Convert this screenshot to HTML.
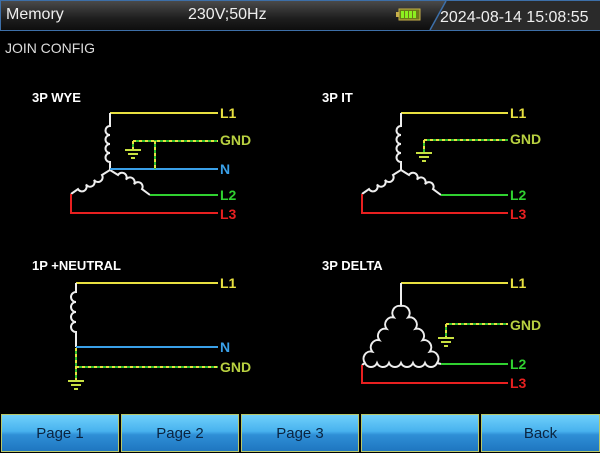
<!DOCTYPE html>
<html><head><meta charset="utf-8"><style>
html,body{margin:0;padding:0;background:#000;width:600px;height:450px;overflow:hidden;font-family:"Liberation Sans",sans-serif}
.hdr{position:absolute;left:0;top:0;width:598px;height:29px;border:1px solid #3d6fa8;background:linear-gradient(#4a4a4a,#1e1e1e 60%,#0e0e0e)}
.hdr span{position:absolute;top:5px;color:#eee;font-size:16px}
.btn{position:absolute;top:414px;height:36px;width:116px;border:1px solid #b8c86a;background:linear-gradient(#6fd0fb,#48b2ee 45%,#2f8fd6 55%,#1f76c0);color:#0b2440;font-size:15px;text-align:center;line-height:38px}
</style></head><body>
<div class="hdr">
<span style="left:5px">Memory</span>
<span style="left:187px">230V;50Hz</span>
</div>
<svg style="position:absolute;left:0;top:0" width="600" height="450">
<polygon points="430,30 446,1 600,1 600,30" fill="#2a2a2a"/>
<line x1="430" y1="30" x2="446" y2="1" stroke="#3d6fa8" stroke-width="1.5"/>
<rect x="399" y="9" width="21" height="11" fill="#6b7a18" stroke="#c8b04a" stroke-width="1"/>
<rect x="396" y="12" width="3" height="5" fill="#c8b04a"/>
<rect x="401" y="11" width="3" height="7" fill="#8cf020"/><rect x="405" y="11" width="3" height="7" fill="#8cf020"/><rect x="409" y="11" width="3" height="7" fill="#8cf020"/><rect x="413" y="11" width="3" height="7" fill="#8cf020"/>
<text x="440" y="22" fill="#eee" font-size="16" font-family="Liberation Sans">2024-08-14 15:08:55</text>
<text x="5" y="53" fill="#ddd" font-size="14" font-family="Liberation Sans" textLength="90">JOIN CONFIG</text>
<g font-family="Liberation Sans" font-weight="bold" font-size="13" fill="#fff">
<text x="32" y="102">3P WYE</text><text x="322" y="102">3P IT</text>
<text x="32" y="270">1P +NEUTRAL</text><text x="322" y="270">3P DELTA</text>
</g>
<g fill="none" stroke-width="2">
<!-- WYE -->
<path d="M110 113H218" stroke="#e8e040"/>
<path d="M110 113V126 a4 4 0 0 0 0 9 a4 4 0 0 0 0 9 a4 4 0 0 0 0 9 a4 4 0 0 0 0 9 V170 L102 175 a4.6 4.6 0 0 1 -8 4.7 a4.6 4.6 0 0 1 -8 4.7 a4.6 4.6 0 0 1 -8 4.7 L71 194 M110 170 L118 175 a4.6 4.6 0 0 1 8 4.7 a4.6 4.6 0 0 1 8 4.7 a4.6 4.6 0 0 1 8 4.7 L150 195" stroke="#eee"/>
<path d="M110 169H218" stroke="#3aa0e8"/>
<path d="M150 195H218" stroke="#30d030"/>
<path d="M71 194V213H218" stroke="#e82020"/>
<path d="M133 141H218 M155 141V169 M133 141V149" stroke="#30c030"/>
<path d="M133 141H218 M155 141V169 M133 141V149" stroke="#e8e040" stroke-dasharray="3 3"/>
<path d="M125 150H141 M128 154H138 M131 158H135" stroke="#c8e040"/>
<!-- IT -->
<path d="M401 113H508" stroke="#e8e040"/>
<path d="M401 113V126 a4 4 0 0 0 0 9 a4 4 0 0 0 0 9 a4 4 0 0 0 0 9 a4 4 0 0 0 0 9 V170 L393 175 a4.6 4.6 0 0 1 -8 4.7 a4.6 4.6 0 0 1 -8 4.7 a4.6 4.6 0 0 1 -8 4.7 L362 194 M401 170 L409 175 a4.6 4.6 0 0 1 8 4.7 a4.6 4.6 0 0 1 8 4.7 a4.6 4.6 0 0 1 8 4.7 L441 195" stroke="#eee"/>
<path d="M441 195H508" stroke="#30d030"/>
<path d="M362 194V213H508" stroke="#e82020"/>
<path d="M424 140H508 M424 140V152" stroke="#30c030"/>
<path d="M424 140H508 M424 140V152" stroke="#e8e040" stroke-dasharray="3 3"/>
<path d="M416 153H432 M419 157H429 M422 161H426" stroke="#c8e040"/>
<!-- 1P -->
<path d="M76 283H218" stroke="#e8e040"/>
<path d="M76 283V292 a4 4 0 0 0 0 10 a4 4 0 0 0 0 10 a4 4 0 0 0 0 10 a4 4 0 0 0 0 10 V347" stroke="#eee"/>
<path d="M76 347H218" stroke="#3aa0e8"/>
<path d="M76 367H218 M76 348V380" stroke="#30c030"/>
<path d="M76 367H218 M76 348V380" stroke="#e8e040" stroke-dasharray="3 3"/>
<path d="M68 381H84 M71 385H81 M74 389H78" stroke="#c8e040"/>
<!-- DELTA -->
<path d="M401 283H508" stroke="#e8e040"/>
<path d="M401 283V306" stroke="#eee"/>
<path d="M401 306 a7.2 7.2 0 0 1 7.2 11.4 a7.2 7.2 0 0 1 7.2 11.4 a7.2 7.2 0 0 1 7.2 11.4 a7.2 7.2 0 0 1 7.2 11.4 a7.2 7.2 0 0 1 7.2 11.4 a6.5 6.5 0 0 1 -12 0 a6.5 6.5 0 0 1 -12 0 a6.5 6.5 0 0 1 -12 0 a6.5 6.5 0 0 1 -12 0 a6.5 6.5 0 0 1 -12 0 a6.5 6.5 0 0 1 -12 0 a7.2 7.2 0 0 1 7.2 -11.4 a7.2 7.2 0 0 1 7.2 -11.4 a7.2 7.2 0 0 1 7.2 -11.4 a7.2 7.2 0 0 1 7.2 -11.4 a7.2 7.2 0 0 1 7.2 -11.4 M437 363L441 364 M365 363L362 365" stroke="#eee"/>
<path d="M441 364H508" stroke="#30d030"/>
<path d="M362 365V383H508" stroke="#e82020"/>
<path d="M446 324H508 M446 324V337" stroke="#30c030"/>
<path d="M446 324H508 M446 324V337" stroke="#e8e040" stroke-dasharray="3 3"/>
<path d="M438 338H454 M441 342H451 M444 346H448" stroke="#c8e040"/>
</g>
<g font-family="Liberation Sans" font-weight="bold" font-size="14">
<text x="220" y="118" fill="#e8e040">L1</text>
<text x="220" y="145" fill="#b8d040">GND</text>
<text x="220" y="174" fill="#3aa0e8">N</text>
<text x="220" y="200" fill="#30d030">L2</text>
<text x="220" y="219" fill="#e82020">L3</text>
<text x="510" y="118" fill="#e8e040">L1</text>
<text x="510" y="144" fill="#b8d040">GND</text>
<text x="510" y="200" fill="#30d030">L2</text>
<text x="510" y="219" fill="#e82020">L3</text>
<text x="220" y="288" fill="#e8e040">L1</text>
<text x="220" y="352" fill="#3aa0e8">N</text>
<text x="220" y="372" fill="#b8d040">GND</text>
<text x="510" y="288" fill="#e8e040">L1</text>
<text x="510" y="330" fill="#b8d040">GND</text>
<text x="510" y="369" fill="#30d030">L2</text>
<text x="510" y="388" fill="#e82020">L3</text>
</g>
</svg>
<div class="btn" style="left:1px">Page 1</div>
<div class="btn" style="left:121px">Page 2</div>
<div class="btn" style="left:241px">Page 3</div>
<div class="btn" style="left:361px"></div>
<div class="btn" style="left:481px;width:117px">Back</div>
</body></html>
